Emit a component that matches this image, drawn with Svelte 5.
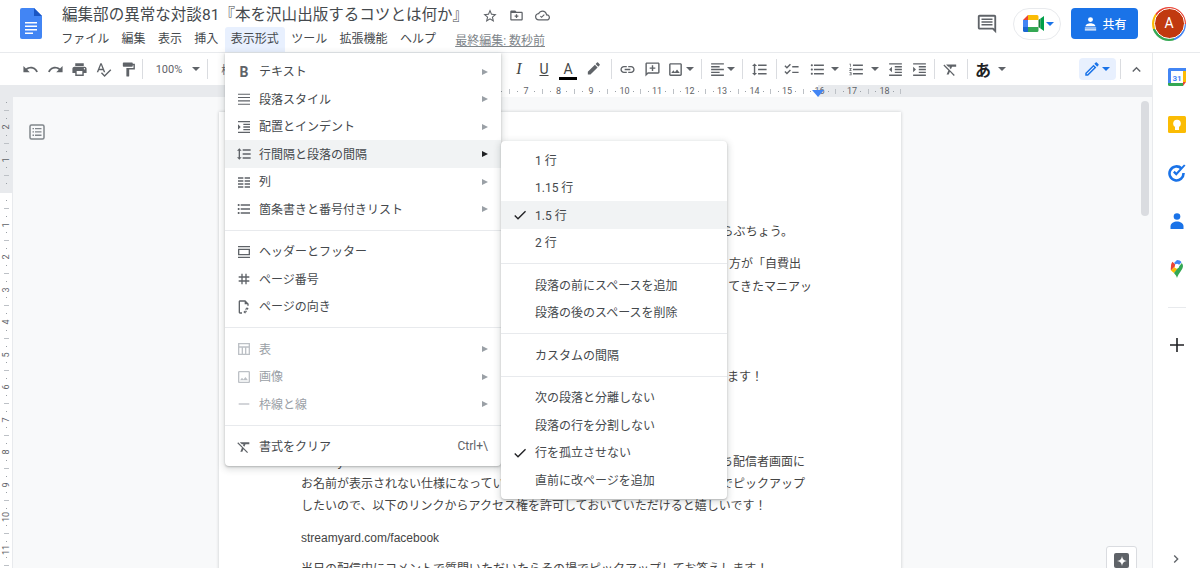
<script>
  const p = {
    undo: "M12.5 8c-2.65 0-5.05.99-6.9 2.6L2 7v9h9l-3.62-3.62c1.39-1.16 3.16-1.88 5.12-1.88 3.54 0 6.55 2.31 7.6 5.5l2.37-.78C21.08 11.03 17.15 8 12.5 8z",
    redo: "M18.4 10.6C16.55 8.99 14.15 8 11.5 8c-4.65 0-8.58 3.03-9.96 7.22L3.9 16c1.05-3.19 4.05-5.5 7.6-5.5 1.95 0 3.73.72 5.12 1.88L13 16h9V7l-3.6 3.6z",
    print: "M19 8H5c-1.66 0-3 1.34-3 3v6h4v4h12v-4h4v-6c0-1.66-1.34-3-3-3zm-3 11H8v-5h8v5zm3-7c-.55 0-1-.45-1-1s.45-1 1-1 1 .45 1 1-.45 1-1 1zm-1-9H6v4h12V3z",
    spell: "M12.45 16h2.09L9.43 3H7.57L2.46 16h2.09l1.12-3h5.64l1.14 3zm-6.02-5L8.5 5.48 10.57 11H6.43zm15.16.59l-8.09 8.09L9.83 16l-1.41 1.41 5.09 5.09L23 13l-1.41-1.41z",
    paint: "M18 4V3c0-.55-.45-1-1-1H5c-.55 0-1 .45-1 1v4c0 .55.45 1 1 1h12c.55 0 1-.45 1-1V6h1v4H9v11c0 .55.45 1 1 1h2c.55 0 1-.45 1-1v-9h8V4h-3z",
    marker: "M17.75 9 14 5.25l-10 10V19h3.75l10-10zm2.96-2.96c.39-.39.39-1.02 0-1.41l-2.34-2.34a1 1 0 0 0-1.41 0L15 4.25 18.75 8l1.96-1.96z",
    link: "M3.9 12c0-1.71 1.39-3.1 3.1-3.1h4V7H7c-2.76 0-5 2.24-5 5s2.24 5 5 5h4v-1.9H7c-1.71 0-3.1-1.39-3.1-3.1zM8 13h8v-2H8v2zm9-6h-4v1.9h4c1.71 0 3.1 1.39 3.1 3.1s-1.39 3.1-3.1 3.1h-4V17h4c2.76 0 5-2.24 5-5s-2.24-5-5-5z",
    addComment: "M20 2H4c-1.1 0-2 .9-2 2v18l4-4h14c1.1 0 2-.9 2-2V4c0-1.1-.9-2-2-2zm0 14H5.17L4 17.17V4h16v12zM11 6h2v3h3v2h-3v3h-2v-3H8V9h3z",
    image: "M19 5v14H5V5h14m0-2H5c-1.1 0-2 .9-2 2v14c0 1.1.9 2 2 2h14c1.1 0 2-.9 2-2V5c0-1.1-.9-2-2-2zm-4.86 8.86l-3 3.87L9 13.14 6 17h12l-3.86-5.14z",
    align: "M15 15H3v2h12v-2zm0-8H3v2h12V7zM3 13h18v-2H3v2zm0 8h18v-2H3v2zM3 3v2h18V3H3z",
    spacing: "M6 7h2.5L5 3.5 1.5 7H4v10H1.5L5 20.5 8.5 17H6V7zm4-2v2h12V5H10zm0 14h12v-2H10v2zm0-6h12v-2H10v2z",
    check: "M22 7h-9v2h9V7zm0 8h-9v2h9v-2zM5.54 11 2 7.46l1.41-1.41 2.12 2.12 4.24-4.24 1.41 1.41L5.54 11zm0 8L2 15.46l1.41-1.41 2.12 2.12 4.24-4.24 1.41 1.41L5.54 19z",
    bullets: "M4 10.5c-.83 0-1.5.67-1.5 1.5s.67 1.5 1.5 1.5 1.5-.67 1.5-1.5-.67-1.5-1.5-1.5zm0-6c-.83 0-1.5.67-1.5 1.5S3.17 7.5 4 7.5 5.5 6.83 5.5 6 4.83 4.5 4 4.5zm0 12c-.83 0-1.5.68-1.5 1.5s.68 1.5 1.5 1.5 1.5-.68 1.5-1.5-.67-1.5-1.5-1.5zM7 19h14v-2H7v2zm0-6h14v-2H7v2zm0-8v2h14V5H7z",
    numbers: "M2 17h2v.5H3v1h1v.5H2v1h3v-4H2v1zm1-9h1V4H2v1h1v3zm-1 3h1.8L2 13.1v.9h3v-1H3.2L5 10.9V10H2v1zm5-6v2h14V5H7zm0 14h14v-2H7v2zm0-6h14v-2H7v2z",
    outdent: "M11 17h10v-2H11v2zm-8-5l4 4V8l-4 4zm0 9h18v-2H3v2zM3 3v2h18V3H3zm8 6h10V7H11v2zm0 4h10v-2H11v2z",
    indent: "M3 21h18v-2H3v2zM3 8v8l4-4-4-4zm8 9h10v-2H11v2zM3 3v2h18V3H3zm8 6h10V7H11v2zm0 4h10v-2H11v2z",
    clear: "M3.27 5L2 6.27l6.97 6.97L6.5 19h3l1.57-3.66L16.73 21 18 19.73 3.55 5.27 3.27 5zM6 5v.18L8.82 8h2.4l-.72 1.68 2.1 2.1L14.21 8H20V5H6z",
    pen: "M3 17.25V21h3.75L17.81 9.94l-3.75-3.75L3 17.25zM5.92 19H5v-.92l9.06-9.06.92.92L5.92 19zM20.71 5.63l-2.34-2.34c-.39-.39-1.02-.39-1.41 0l-1.83 1.83 3.75 3.75 1.83-1.83c.39-.39.39-1.02 0-1.41z",
    chevron: "M7.41 15.41L12 10.83l4.59 4.58L18 14l-6-6-6 6z",
    lines: "M3 4h18v1.6H3zM3 9h18v1.6H3zM3 14h18v1.6H3zM3 19h18v1.6H3z",
    columns: "M3 5h8v2H3zM13 5h8v2h-8zM3 9.5h8v2H3zM13 9.5h8v2h-8zM3 14h8v2H3zM13 14h8v2h-8zM3 18.5h8v2H3zM13 18.5h8v2h-8z",
    headfoot: "M3 3h18v2H3zM3 19h18v2H3zM3 7h18v10H3zm2 2v6h14V9z",
    hash: "M20 10V8h-4V4h-2v4h-4V4H8v4H4v2h4v4H4v2h4v4h2v-4h4v4h2v-4h4v-2h-4v-4h4zm-6 4h-4v-4h4v4z",
    orient: "M6 2h8l5 5v3h-2V8h-4V4H6v16h3v2H6c-1.1 0-2-.9-2-2V4c0-1.1.9-2 2-2zM16 12l3 2.5-3 2.5v-1.6c-1.3.1-2 .8-2.4 1.8-.1-2.3 1-3.6 2.4-3.7zM14 22l-3-2.5 3-2.5v1.6c1.3-.1 2-.8 2.4-1.8.1 2.3-1 3.6-2.4 3.7z",
    table: "M3 3h18v18H3zm2 2v3h14V5zm0 5v9h3.5v-9zm5.5 0v9h3v-9zm5 0v9H19v-9z",
    dash: "M4 11h16v2H4z",
    tick: "M9 16.2 4.8 12l-1.4 1.4L9 19 21 7l-1.4-1.4z"
  };

  // c = centre of the item on the toolbar, w = its width
  const rawTools = [
    { d: p.undo, c: 30 }, { d: p.redo, c: 55 }, { d: p.print, c: 79 }, { d: p.spell, c: 103 }, { d: p.paint, c: 128 },
    { sep: 1, c: 142 }, { text: "100%", c: 169, w: 30, cls: "small" }, { caret: 1, c: 196 }, { sep: 1, c: 207 },
    { text: "標準テキスト", c: 254, w: 72, cls: "small" },
    { text: "I", c: 519, w: 18, cls: "italic" }, { text: "U", c: 544, w: 18, cls: "under" }, { text: "A", c: 568, w: 18, cls: "color" },
    { d: p.marker, c: 593 }, { sep: 1, c: 611 }, { d: p.link, c: 627 }, { d: p.addComment, c: 652 }, { d: p.image, c: 675 },
    { caret: 1, c: 690 }, { sep: 1, c: 701 }, { d: p.align, c: 717 }, { caret: 1, c: 731 }, { sep: 1, c: 742 },
    { d: p.spacing, c: 759 }, { sep: 1, c: 776 }, { d: p.check, c: 791 }, { d: p.bullets, c: 817 }, { caret: 1, c: 835 },
    { d: p.numbers, c: 856 }, { caret: 1, c: 875 }, { d: p.outdent, c: 895 }, { d: p.indent, c: 919 }, { sep: 1, c: 934 },
    { d: p.clear, c: 950 }, { sep: 1, c: 967 }, { text: "あ", c: 983, w: 18, cls: "kana" }, { caret: 1, c: 1002 },
    { pen: 1, c: 1097.5, w: 37 }, { sep: 1, c: 1120 }, { d: p.chevron, c: 1136 }
  ];

  let right = 0;
  const tools = rawTools.map((t) => {
    const w = t.w ?? (t.sep ? 1 : t.caret ? 8 : 17);
    const gap = t.c - w / 2 - right;
    right = t.c + w / 2;
    return { ...t, w, gap };
  });

  const menuBar = ["ファイル", "編集", "表示", "挿入", "表示形式", "ツール", "拡張機能", "ヘルプ"];

  const formatMenu = [
    [
      { label: "テキスト", bold: true, arrow: true },
      { label: "段落スタイル", d: p.lines, arrow: true },
      { label: "配置とインデント", d: p.indent, arrow: true },
      { label: "行間隔と段落の間隔", d: p.spacing, arrow: true, active: true },
      { label: "列", d: p.columns, arrow: true },
      { label: "箇条書きと番号付きリスト", d: p.bullets, arrow: true }
    ],
    [
      { label: "ヘッダーとフッター", d: p.headfoot },
      { label: "ページ番号", d: p.hash },
      { label: "ページの向き", d: p.orient }
    ],
    [
      { label: "表", d: p.table, arrow: true, off: true },
      { label: "画像", d: p.image, arrow: true, off: true },
      { label: "枠線と線", d: p.dash, arrow: true, off: true }
    ],
    [{ label: "書式をクリア", d: p.clear, hint: "Ctrl+\\" }]
  ];

  const spacingMenu = [
    [{ label: "1 行" }, { label: "1.15 行" }, { label: "1.5 行", on: true, active: true }, { label: "2 行" }],
    [{ label: "段落の前にスペースを追加" }, { label: "段落の後のスペースを削除" }],
    [{ label: "カスタムの間隔" }],
    [{ label: "次の段落と分離しない" }, { label: "段落の行を分割しない" }, { label: "行を孤立させない", on: true }, { label: "直前に改ページを追加" }]
  ];

  const hNums = ["2", "1", "", "1", "2", "3", "4", "5", "6", "7", "8", "9", "10", "11", "12", "13", "14", "15", "16", "17", "18"];
  const vNums = ["", "2", "1", "", "1", "2", "3", "4", "5", "6", "7", "8", "9", "10", "11", ""];
</script>

<div class="app">
  <header class="top">
    <svg class="logo" viewBox="0 0 22 31" width="22" height="31">
      <path fill="#4285f4" d="M14 0H2a2 2 0 0 0-2 2v27a2 2 0 0 0 2 2h18a2 2 0 0 0 2-2V8z" />
      <path fill="#1a56c4" d="M14 0v8h8z" />
      <path fill="#fff" d="M5 14h12v1.6H5zM5 17.5h12v1.6H5zM5 21h12v1.6H5zM5 24.5h8v1.6H5z" />
    </svg>
    <div class="titles">
      <div class="title-row">
        <span class="title">編集部の異常な対談81『本を沢山出版するコツとは何か』</span>
        <div class="title-icons">
          <svg viewBox="0 0 24 24" width="16" height="16"><path d="M22 9.24l-7.19-.62L12 2 9.19 8.63 2 9.24l5.46 4.73L5.82 21 12 17.27 18.18 21l-1.63-7.03L22 9.24zM12 15.4l-3.76 2.27 1-4.28-3.32-2.88 4.38-.38L12 6.1l1.71 4.04 4.38.38-3.32 2.88 1 4.28L12 15.4z" /></svg>
          <svg viewBox="0 0 24 24" width="15" height="15"><path d="M20 6h-8l-2-2H4c-1.1 0-2 .9-2 2v12c0 1.1.9 2 2 2h16c1.1 0 2-.9 2-2V8c0-1.1-.9-2-2-2zm0 12H4V8h16v10zM11 10h2v2h2v2h-2v2h-2v-2H9v-2h2z" /></svg>
          <svg viewBox="0 0 24 24" width="15" height="15"><path d="M19.35 10.04C18.67 6.59 15.64 4 12 4 9.11 4 6.6 5.64 5.35 8.04 2.34 8.36 0 10.91 0 14c0 3.31 2.69 6 6 6h13c2.76 0 5-2.24 5-5 0-2.64-2.05-4.78-4.65-4.96zM19 18H6c-2.21 0-4-1.79-4-4 0-2.05 1.53-3.76 3.56-3.97l1.07-.11.5-.95C8.08 7.14 9.94 6 12 6c2.62 0 4.88 1.86 5.39 4.43l.3 1.5 1.53.11c1.56.1 2.78 1.41 2.78 2.96 0 1.65-1.35 3-3 3zM10.5 16 8 13.5l1.2-1.2 1.3 1.3 3.8-3.8 1.2 1.2z" /></svg>
        </div>
      </div>
      <nav class="menubar">
        {#each menuBar as item}
          <span class="mb-item" class:open={item === "表示形式"}>{item}</span>
        {/each}
        <span class="last-edit">最終編集: 数秒前</span>
      </nav>
    </div>
    <div class="top-right">
      <svg class="comments" viewBox="0 0 24 24" width="22" height="22"><path d="M20 17.17 18.83 16H4V4h16v13.17zM20 2H4c-1.1 0-2 .9-2 2v12c0 1.1.9 2 2 2h14l4 4V4c0-1.1-.9-2-2-2zM6 12h12v1.6H6zM6 9h12v1.6H6zM6 6h12v1.6H6z" /></svg>
      <div class="meet">
        <svg viewBox="0 0 22 17" width="22" height="17">
          <path fill="#ea4335" d="M5 0 0 5h5z" />
          <path fill="#4285f4" d="M0 5h5v7H0z" />
          <path fill="#1967d2" d="M0 12h5v5H1.500A1.500 1.500 0 0 1 0 15.500z" />
          <path fill="#fbbc04" d="M5 0h9a1.500 1.500 0 0 1 1.500 1.500V5H5z" />
          <path fill="#34a853" d="M5 12h10.500v3.500A1.500 1.500 0 0 1 14 17H5z" />
          <path fill="#188038" d="M15.500 5v7l2 1.500V3.500z" />
          <path fill="#00a04a" d="M17.500 3.500 21 1v15l-3.500-2.500z" />
        </svg>
        <svg class="meet-caret" viewBox="0 0 8 4" width="8" height="4"><path d="M0 0h8L4 4z" /></svg>
      </div>
      <button class="share">
        <svg viewBox="0 0 24 24" width="17" height="17"><path fill="#fff" d="M12 3a3.500 3.500 0 1 1 0 7 3.500 3.500 0 0 1 0-7zM5 16c0-3 4-4.500 7-4.500s7 1.500 7 4.500zM4 17.500h16V19H4zM4 20h16v2H4z" /></svg>
        <span>共有</span>
      </button>
      <div class="avatar"><span>A</span></div>
    </div>
  </header>

  <div class="body">
    <div class="main">
      <div class="toolbar">
        {#each tools as t}
          {#if t.sep}
            <i class="sep" style="margin-left:{t.gap}px"></i>
          {:else if t.caret}
            <svg class="caret" viewBox="0 0 8 4" width="8" height="4" style="margin-left:{t.gap}px"><path d="M0 0h8L4 4z" /></svg>
          {:else if t.pen}
            <span class="pen-btn" style="margin-left:{t.gap}px;width:{t.w}px">
              <svg viewBox="0 0 24 24" width="18" height="18"><path d={p.pen} /></svg>
              <svg viewBox="0 0 8 4" width="8" height="4"><path d="M0 0h8L4 4z" /></svg>
            </span>
          {:else if t.text}
            <span class="tool-text {t.cls}" style="margin-left:{t.gap}px;width:{t.w}px">{t.text}</span>
          {:else}
            <svg class="tool" viewBox="0 0 24 24" width="17" height="17" style="margin-left:{t.gap}px"><path d={t.d} /></svg>
          {/if}
        {/each}
      </div>

      <div class="h-ruler">
        {#each hNums as n}
          <span class="cell"><b>{n}</b><em></em><u></u><em></em></span>
        {/each}
        <svg class="marker" viewBox="0 0 12 7" width="12" height="7"><path d="M0 0h12L6 7z" /></svg>
      </div>

      <div class="work">
        <div class="v-ruler">
          {#each vNums as n}
            <span class="vcell"><b>{n}</b><em></em><u></u><em></em></span>
          {/each}
        </div>
        <div class="canvas">
          <div class="outline-col">
            <svg viewBox="0 0 16 16" width="16" height="16">
              <rect x="1" y="1" width="14" height="14" rx="1.500" fill="none" stroke="#80868b" stroke-width="1.500" />
              <path fill="#80868b" d="M3.500 4h1.500v1.300H3.500zM6 4h6.500v1.300H6zM3.500 7.300h1.500v1.300H3.500zM6 7.300h6.500v1.300H6zM3.500 10.600h1.500v1.300H3.500zM6 10.600h6.500v1.300H6z" />
            </svg>
          </div>
          <div class="page">
            <p class="line tail e794">らぶちょう。</p>
            <p class="line tail e801 g10">方が「自費出</p>
            <p class="line tail e812">てきたマニアッ</p>
            <p class="line tail e763 g67">ます！</p>
            <p class="line split e805 g61"><span>streamyard</span><span>ち配信者画面に</span></p>
            <p class="line split e805"><span>お名前が表示されない仕様になってい</span><span>でピックアップ</span></p>
            <p class="line">したいので、以下のリンクからアクセス権を許可しておいていただけると嬉しいです！</p>
            <p class="line g8">streamyard.com/facebook</p>
            <p class="line g8">当日の配信中にコメントで質問いただいたらその場でピックアップしてお答えします！</p>
          </div>
          <div class="scrollbar"></div>
          <div class="explore">
            <span class="explore-icon">
              <svg viewBox="0 0 12 12" width="10" height="10"><path fill="#fff" d="M6 0c.5 3.500 2 5.500 6 6-4 .5-5.500 2.500-6 6-.5-3.500-2-5.500-6-6 4-.5 5.500-2.500 6-6z" /></svg>
            </span>
          </div>
        </div>
      </div>
    </div>

    <aside class="side">
      <svg class="s-icon" viewBox="0 0 18 18" width="18" height="18">
        <path fill="#4285f4" d="M0 1.500A1.500 1.500 0 0 1 1.500 0H18v3H3v12H0z" />
        <path fill="#fbbc04" d="M15 3h3v11h-3z" />
        <path fill="#34a853" d="M0 15h15v3H1.500A1.500 1.500 0 0 1 0 16.500z" />
        <path fill="#ea4335" d="M15 14h3l-3 4z" />
        <text x="9" y="13" text-anchor="middle" font-size="8" font-weight="700" fill="#4285f4" font-family="Roboto, sans-serif">31</text>
      </svg>
      <svg class="s-icon" viewBox="0 0 18 18" width="18" height="18">
        <rect width="18" height="17" rx="1.500" fill="#fbbc04" />
        <circle cx="9" cy="7.500" r="3.800" fill="#fff" />
        <path fill="#fff" d="M7 10.500h4V14H7z" />
      </svg>
      <svg class="s-icon" viewBox="0 0 18 18" width="18" height="18">
        <path fill="none" stroke="#1a73e8" stroke-width="2.600" d="M13.500 4.500A7 7 0 1 0 15.500 9" />
        <path fill="#1a73e8" d="M17.500 1.500 8.300 11.800 5 8.500l1.700-1.700 1.600 1.600 7.700-8z" />
      </svg>
      <svg class="s-icon" viewBox="0 0 18 18" width="18" height="18">
        <circle cx="9" cy="4.500" r="3.300" fill="#1a73e8" />
        <path fill="#1a73e8" d="M2.500 17v-2.500C2.500 11 6 9.500 9 9.500s6.500 1.500 6.500 5V17z" />
      </svg>
      <svg class="s-icon" viewBox="0 0 18 18" width="18" height="18">
        <path fill="#4285f4" d="M9 0c2 0 3.500.8 4.500 2.200L9.500 6.500 6 3z" />
        <path fill="#ea4335" d="M4.500 1.800 8 5.200 3 10.500C2.500 9.500 3 7 3 6c0-1.700.5-3.100 1.500-4.200z" />
        <path fill="#fbbc04" d="M3 10.500 6.500 7c1 1.500 2 2 3.500 1.500L6 13z" />
        <path fill="#34a853" d="M13.800 3c.8 1 1.200 2 1.200 3 0 3.500-4.500 7-6 12-.5-2-1.800-3.500-3-5z" />
        <circle cx="9" cy="6" r="2.200" fill="#fff" />
      </svg>
      <i class="s-div"></i>
      <svg class="s-plus" viewBox="0 0 14 14" width="14" height="14"><path fill="#202124" d="M6.200 0h1.600v6.200H14v1.600H7.800V14H6.200V7.800H0V6.200h6.200z" /></svg>
      <svg class="s-more" viewBox="0 0 24 24" width="16" height="16"><path fill="#5f6368" d="M8.590 16.590 13.170 12 8.590 7.410 10 6l6 6-6 6z" /></svg>
    </aside>
  </div>

  <div class="menu format">
    {#each formatMenu as group, i}
      {#if i}<div class="divider"></div>{/if}
      {#each group as m}
        <div class="row" class:active={m.active} class:off={m.off}>
          <span class="ico">
            {#if m.bold}
              <span class="bold-b">B</span>
            {:else}
              <svg viewBox="0 0 24 24" width="16" height="16"><path d={m.d} /></svg>
            {/if}
          </span>
          <span class="label">{m.label}</span>
          {#if m.arrow}<span class="arrow"></span>{/if}
          {#if m.hint}<span class="hint">{m.hint}</span>{/if}
        </div>
      {/each}
    {/each}
  </div>

  <div class="menu spacing">
    {#each spacingMenu as group, i}
      {#if i}<div class="divider"></div>{/if}
      {#each group as m}
        <div class="row" class:active={m.active}>
          <span class="tick">
            {#if m.on}<svg viewBox="0 0 24 24" width="16" height="16"><path d={p.tick} /></svg>{/if}
          </span>
          <span class="label">{m.label}</span>
        </div>
      {/each}
    {/each}
  </div>
</div>

<style>
  :global(body) {
    margin: 0;
    background: #fff;
  }

  .app {
    position: relative;
    width: 1200px;
    height: 568px;
    overflow: hidden;
    display: flex;
    flex-direction: column;
    font-family: Roboto, "Noto Sans CJK JP", sans-serif;
    color: #45494d;
  }

  svg {
    display: block;
    flex: none;
    fill: #5f6368;
  }

  /* header */
  .top {
    height: 52px;
    flex: none;
    display: flex;
    border-bottom: 1px solid #e8eaed;
    box-sizing: content-box;
  }

  .logo {
    margin: 8px 20px 0 20px;
  }

  .titles {
    display: flex;
    flex-direction: column;
  }

  .title-row {
    display: flex;
    align-items: center;
    height: 27px;
    padding-top: 2px;
    margin-bottom: -2px;
    box-sizing: content-box;
  }

  .title {
    font-size: 15.55px;
    line-height: 27px;
    color: #45494d;
    white-space: nowrap;
  }

  .title-icons {
    display: flex;
    align-items: center;
    gap: 11px;
    margin-left: 14px;
  }

  .menubar {
    display: flex;
    align-items: center;
    height: 25px;
    font-size: 12px;
  }

  .mb-item {
    height: 25px;
    line-height: 24px;
    padding: 0 6.2px;
    white-space: nowrap;
  }

  .mb-item.open {
    background: #e8f0fe;
    border-radius: 3px 3px 0 0;
  }

  .mb-item:first-child {
    margin-left: -7px;
  }

  .last-edit {
    margin-left: 13px;
    font-size: 12px;
    color: #80868b;
    text-decoration: underline;
    white-space: nowrap;
  }

  .top-right {
    margin-left: auto;
    display: flex;
    align-items: center;
    height: 47px;
    padding-right: 14px;
  }

  .comments {
    margin-right: 15px;
  }

  .meet {
    width: 48px;
    height: 32px;
    box-sizing: border-box;
    border: 1px solid #e8eaed;
    border-radius: 16px;
    display: flex;
    align-items: center;
    padding-left: 9px;
    gap: 1px;
  }

  .meet-caret {
    fill: #1a73e8;
  }

  .share {
    width: 67px;
    height: 31px;
    margin-left: 10px;
    border: 0;
    border-radius: 4px;
    background: #1a73e8;
    color: #fff;
    display: flex;
    align-items: center;
    justify-content: center;
    gap: 3px;
    font: 500 12px Roboto, "Noto Sans CJK JP", sans-serif;
  }

  .avatar {
    width: 34px;
    height: 34px;
    margin-left: 14px;
    border-radius: 50%;
    background: conic-gradient(#ea4335 0 25%, #4285f4 25% 45%, #34a853 45% 70%, #fbbc04 70% 85%, #ea4335 85%);
    display: flex;
    align-items: center;
    justify-content: center;
  }

  .avatar span {
    width: 29px;
    height: 29px;
    border-radius: 50%;
    background: #c1390f;
    border: 1px solid #fff;
    box-sizing: content-box;
    margin: -1px;
    color: #fff;
    font-size: 14px;
    line-height: 29px;
    text-align: center;
  }

  /* main */
  .body {
    flex: 1;
    display: flex;
    min-height: 0;
  }

  .main {
    flex: 1;
    min-width: 0;
    display: flex;
    flex-direction: column;
  }

  .toolbar {
    height: 32px;
    flex: none;
    display: flex;
    align-items: center;
    white-space: nowrap;
  }

  .sep {
    display: block;
    width: 1px;
    height: 20px;
    flex: none;
    background: #dadce0;
  }

  .caret {
    fill: #5f6368;
  }

  .tool-text {
    flex: none;
    text-align: center;
    color: #444746;
  }

  .small {
    font-size: 11px;
    color: #5f6368;
  }

  .italic {
    font: italic 16px "Liberation Serif", serif;
  }

  .under {
    font-size: 14px;
    text-decoration: underline;
  }

  .color {
    font-size: 14px;
    line-height: 16px;
    border-bottom: 3px solid #000;
    margin-top: 2px;
  }

  .kana {
    font-size: 16px;
    font-weight: 700;
    color: #202124;
  }

  .pen-btn {
    flex: none;
    height: 22px;
    box-sizing: border-box;
    border-radius: 4px;
    background: #e8f0fe;
    display: flex;
    align-items: center;
    gap: 1px;
    padding-left: 4px;
  }

  .pen-btn svg {
    fill: #1a73e8;
  }

  /* rulers */
  .h-ruler {
    position: relative;
    height: 12px;
    flex: none;
    display: flex;
    padding-left: 229.5px;
    background: linear-gradient(to right, #e8eaed 301px, #fff 301px, #fff 818px, #e8eaed 818px);
    overflow: hidden;
  }

  .cell {
    flex: none;
    width: 32.5px;
    display: grid;
    grid-template-columns: repeat(4, 1fr);
    align-items: center;
    justify-items: center;
    font-size: 9px;
    color: #5f6368;
  }

  .cell:nth-last-child(2) em:last-child {
    display: none;
  }

  .cell b,
  .vcell b {
    font-weight: 400;
    white-space: nowrap;
  }

  .cell em,
  .vcell em {
    display: block;
    width: 1px;
    height: 1px;
    background: #9aa0a6;
  }

  .cell u {
    display: block;
    width: 1px;
    height: 5px;
    background: #bdc1c6;
  }

  .vcell u {
    display: block;
    width: 5px;
    height: 1px;
    background: #bdc1c6;
  }

  .marker {
    position: absolute;
    left: 812px;
    top: 5px;
    fill: #4285f4;
  }

  .work {
    flex: 1;
    min-height: 0;
    display: flex;
  }

  .v-ruler {
    width: 12px;
    flex: none;
    border-right: 1px solid #e8eaed;
    box-sizing: content-box;
    display: flex;
    flex-direction: column;
    background: linear-gradient(to bottom, #e8eaed 96px, #fff 96px);
    overflow: hidden;
  }

  .vcell {
    flex: none;
    height: 32.5px;
    display: grid;
    grid-template-rows: repeat(4, 1fr);
    align-items: center;
    justify-items: center;
    font-size: 9px;
    color: #5f6368;
  }

  .vcell:first-child {
    margin-top: -6.5px;
  }

  .vcell b {
    transform: rotate(-90deg);
    line-height: 8px;
  }

  .canvas {
    position: relative;
    flex: 1;
    min-width: 0;
    display: flex;
    background: #f8f9fa;
  }

  .outline-col {
    width: 206px;
    flex: none;
    padding: 27px 0 0 16px;
    box-sizing: border-box;
  }

  .page {
    width: 682px;
    flex: none;
    height: 600px;
    margin-top: 15px;
    padding: 109px 83px 0 82px;
    box-sizing: border-box;
    background: #fff;
    box-shadow: 0 0 3px rgba(60, 64, 67, 0.25);
    font-family: "Liberation Sans", "Noto Sans CJK JP", sans-serif;
    font-size: 12px;
    color: #444;
  }

  .line {
    margin: 0;
    line-height: 22.4px;
    white-space: nowrap;
  }

  .tail {
    text-align: right;
  }

  .split {
    display: flex;
    justify-content: space-between;
  }

  .e794 { padding-right: 25px; }
  .e801 { padding-right: 17px; }
  .e812 { padding-right: 6px; }
  .e805 { padding-right: 13px; }
  .e763 { padding-right: 55px; }
  .g8 { margin-top: 9px; }
  .g10 { margin-top: 10px; }
  .g61 { margin-top: 62px; }
  .g67 { margin-top: 68px; }

  .scrollbar {
    position: absolute;
    left: 1128px;
    top: 4px;
    width: 8px;
    height: 115px;
    border-radius: 4px;
    background: #dadce0;
  }

  .explore {
    position: absolute;
    left: 1093px;
    top: 449px;
    width: 31px;
    height: 32px;
    box-sizing: border-box;
    background: #fff;
    border: 1px solid #dadce0;
    border-radius: 3px;
    display: flex;
    justify-content: center;
    padding-top: 6px;
  }

  .explore-icon {
    width: 15px;
    height: 15px;
    border-radius: 2px;
    background: #5f6368;
    display: flex;
    align-items: center;
    justify-content: center;
  }

  /* side panel */
  .side {
    position: relative;
    width: 47px;
    flex: none;
    border-left: 1px solid #e8eaed;
    display: flex;
    flex-direction: column;
    align-items: center;
    padding-top: 15px;
    gap: 30px;
  }

  .s-div {
    display: block;
    width: 18px;
    height: 1px;
    margin-top: -1px;
    background: #e8eaed;
  }

  .s-plus {
    margin-top: 0;
  }

  .s-more {
    position: absolute;
    left: 15px;
    bottom: 1px;
  }

  /* menus */
  .menu {
    position: absolute;
    background: #fff;
    border-radius: 0 0 4px 4px;
    box-shadow: 0 2px 6px 2px rgba(60, 64, 67, 0.15), 0 1px 2px rgba(60, 64, 67, 0.3);
    font-size: 12px;
    box-sizing: border-box;
  }

  .format {
    left: 225px;
    top: 53px;
    width: 276px;
    height: 413px;
    padding-top: 4.75px;
  }

  .spacing {
    left: 501px;
    top: 141px;
    width: 226px;
    height: 358px;
    padding-top: 5.25px;
    border-radius: 4px;
  }

  .row {
    height: 27.5px;
    display: flex;
    align-items: center;
    color: #45494d;
    white-space: nowrap;
  }

  .row.active {
    background: #f1f3f4;
  }

  .row.off {
    color: #9aa0a6;
  }

  .row.off svg {
    fill: #bdc1c6;
  }

  .label {
    padding-bottom: 2px;
  }

  .ico {
    width: 16px;
    margin: 0 7px 0 11px;
    display: flex;
    justify-content: center;
  }

  .ico svg {
    fill: #5f6368;
  }

  .bold-b {
    font-size: 14px;
    font-weight: 700;
    color: #5f6368;
  }

  .tick {
    width: 16px;
    margin: 0 7px 0 11px;
  }

  .tick svg {
    fill: #202124;
  }

  .arrow {
    margin-left: auto;
    margin-right: 13px;
    width: 0;
    height: 0;
    border-left: 6px solid #9aa0a6;
    border-top: 3.5px solid transparent;
    border-bottom: 3.5px solid transparent;
  }

  .active .arrow {
    border-left-color: #202124;
  }

  .hint {
    margin-left: auto;
    margin-right: 13px;
    color: #5f6368;
    padding-bottom: 2px;
  }

  .divider {
    height: 15px;
    display: flex;
    align-items: center;
  }

  .divider::before {
    content: "";
    flex: 1;
    height: 1px;
    background: #e8eaed;
  }
</style>
